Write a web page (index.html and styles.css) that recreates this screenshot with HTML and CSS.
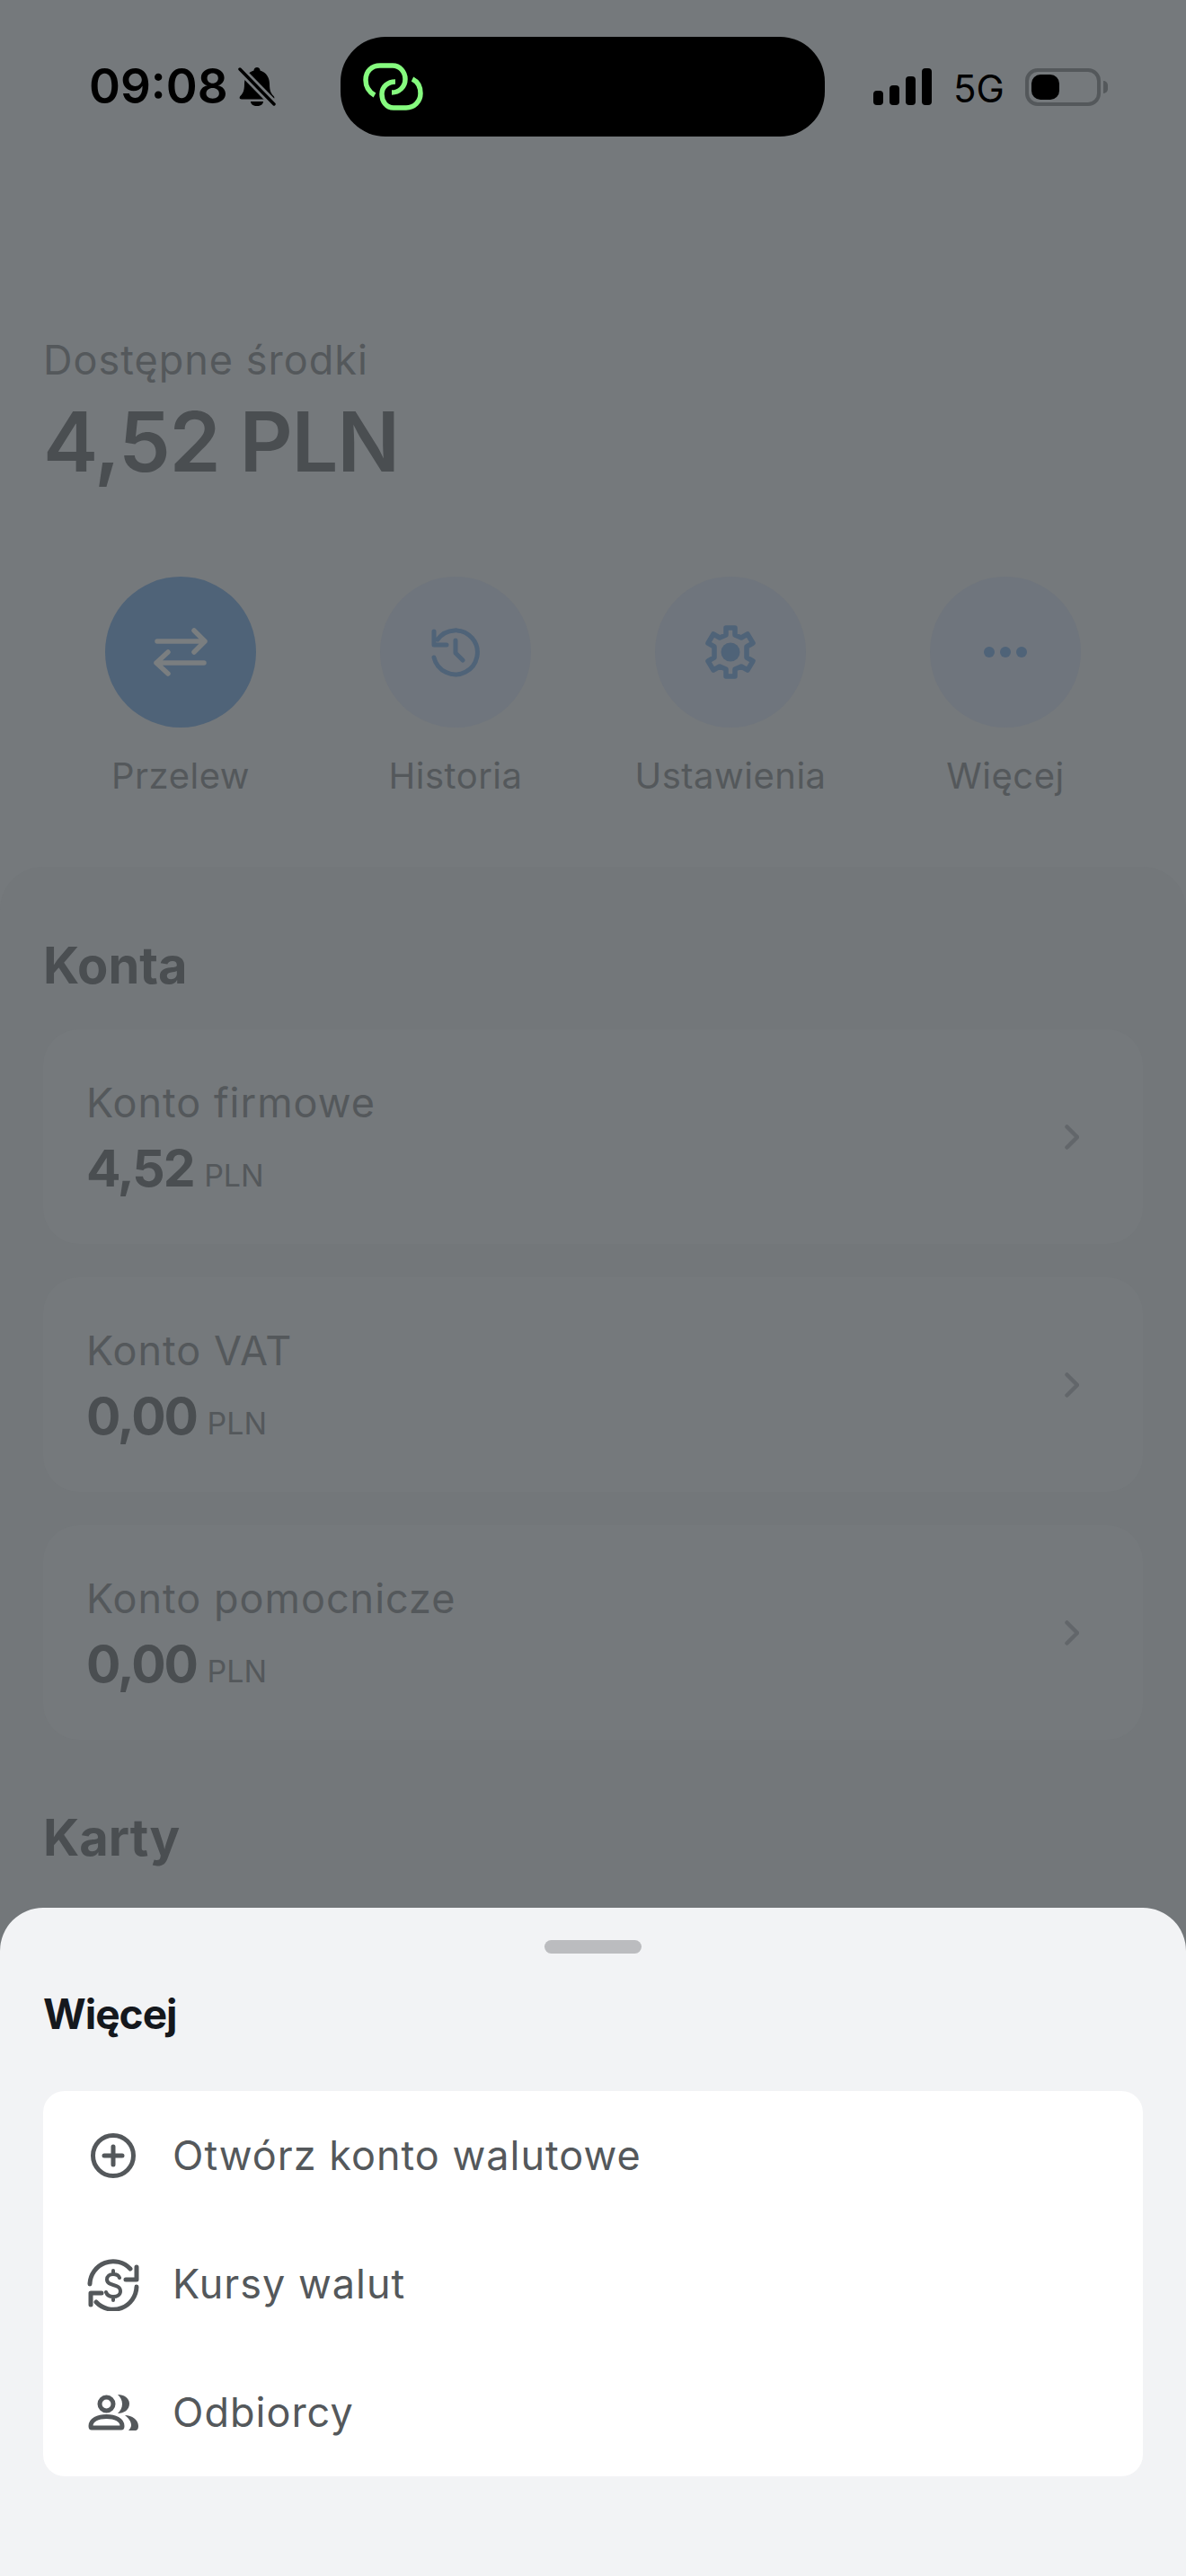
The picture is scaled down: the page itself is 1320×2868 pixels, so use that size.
FILE: index.html
```html
<!DOCTYPE html>
<html lang="pl">
<head>
  <meta charset="UTF-8" />
  <title>Więcej</title>
  <link rel="stylesheet" href="styles.css">
</head>
<body>
  <div class="screen">
    <!-- Status bar -->
    <div class="status-bar">
      <span class="status-time">09:08</span>
      <svg class="bell" viewBox="0 0 42 45" fill="#000">
        <path d="M21 1c2 0 3.500 1.500 3.500 3.500 7 2 10.500 8 10.500 15 0 8 2 11 5 14 1 2 0 3-2 3H4c-2 0-3-1-2-3 3-3 5-6 5-14 0-7 3.500-13 10.500-15C17.500 2.500 19 1 21 1zM14 39h14c0 3-3 5-7 5s-7-2-7-5z"/>
        <path d="M2 3l38 39" stroke="#75797c" stroke-width="9"/>
        <path d="M2 3l38 39" stroke="#000" stroke-width="3.500" stroke-linecap="round"/>
      </svg>
      <div class="island">
        <svg class="island-logo" viewBox="0 0 67 53" fill="none" stroke="#86fb7f" stroke-width="5.500">
          <path d="M13 36C6 32 3 26 3 19 3 9 10 3 19 3h14c8 0 14 7 14 15 0 9-7 15-15 15"/>
          <path d="M55 18c6 3 9 9 9 16 0 9-7 16-16 16H34c-8 0-13-7-13-15 0-9 7-14 15-14"/>
        </svg>
      </div>
      <div class="signal">
        <i class="bar-1"></i><i class="bar-2"></i><i class="bar-3"></i><i class="bar-4"></i>
      </div>
      <span class="status-net">5G</span>
      <div class="battery"><div class="battery-level"></div></div>
      <div class="battery-cap"></div>
    </div>

    <!-- Balance -->
    <div class="balance">
      <div class="balance-label">Dostępne środki</div>
      <div class="balance-value">4,52 PLN</div>
    </div>

    <!-- Quick actions -->
    <div class="actions">
      <div class="action">
        <div class="action-circle action-primary">
          <svg viewBox="0 0 60 60" fill="none" stroke="#7a7e80" stroke-width="5.500" stroke-linecap="round" stroke-linejoin="round">
            <path d="M4 18h53M45 6l12 12-12 12M56 42H3M16 30L3 42l13 12"/>
          </svg>
        </div>
        <span>Przelew</span>
      </div>
      <div class="action">
        <div class="action-circle">
          <svg viewBox="0 0 60 60" fill="none" stroke="#4f6378" stroke-width="5" stroke-linecap="round" stroke-linejoin="round">
            <path d="M10 16A24.500 24.500 0 1 1 6 36M6 7v15h14M30 17v14l8 8"/>
          </svg>
        </div>
        <span>Historia</span>
      </div>
      <div class="action">
        <div class="action-circle">
          <svg viewBox="0 0 60 60" fill="none" stroke="#4f6378" stroke-width="5.500" stroke-linejoin="round">
            <path d="M25 3h10v8l7 3 7-4 6 10-7 4v12l7 4-6 10-7-4-7 3v8H25v-8l-7-3-7 4-6-10 7-4V24l-7-4 6-10 7 4 7-3z"/>
            <circle cx="30" cy="30" r="10.500" fill="#4f6378" stroke="none"/>
          </svg>
        </div>
        <span>Ustawienia</span>
      </div>
      <div class="action">
        <div class="action-circle">
          <svg viewBox="0 0 60 60" fill="#4f6378">
            <circle cx="12" cy="30" r="6"/>
            <circle cx="30" cy="30" r="6"/>
            <circle cx="48" cy="30" r="6"/>
          </svg>
        </div>
        <span>Więcej</span>
      </div>
    </div>

    <!-- Accounts -->
    <div class="section">
      <h2>Konta</h2>
      <div class="account">
        <div class="account-info">
          <div class="account-name">Konto firmowe</div>
          <div class="account-value">4,52 <span>PLN</span></div>
        </div>
        <svg class="chevron" viewBox="0 0 16 28" fill="none" stroke="#62666a" stroke-width="4.500" stroke-linecap="round" stroke-linejoin="round"><path d="M2.500 2.500L14 14 2.500 25.500"/></svg>
      </div>
      <div class="account">
        <div class="account-info">
          <div class="account-name">Konto VAT</div>
          <div class="account-value">0,00 <span>PLN</span></div>
        </div>
        <svg class="chevron" viewBox="0 0 16 28" fill="none" stroke="#62666a" stroke-width="4.500" stroke-linecap="round" stroke-linejoin="round"><path d="M2.500 2.500L14 14 2.500 25.500"/></svg>
      </div>
      <div class="account">
        <div class="account-info">
          <div class="account-name">Konto pomocnicze</div>
          <div class="account-value">0,00 <span>PLN</span></div>
        </div>
        <svg class="chevron" viewBox="0 0 16 28" fill="none" stroke="#62666a" stroke-width="4.500" stroke-linecap="round" stroke-linejoin="round"><path d="M2.500 2.500L14 14 2.500 25.500"/></svg>
      </div>
      <h2 class="cards-title">Karty</h2>
    </div>

    <!-- Bottom sheet -->
    <div class="sheet">
      <div class="sheet-handle"></div>
      <h3>Więcej</h3>
      <div class="menu">
        <div class="menu-row">
          <svg viewBox="0 0 60 60" fill="none" stroke="#54585b" stroke-width="5" stroke-linecap="round">
            <circle cx="30" cy="30" r="22.500"/>
            <path d="M30 20v20M20 30h20"/>
          </svg>
          <span>Otwórz konto walutowe</span>
        </div>
        <div class="menu-row">
          <svg viewBox="0 0 60 60" fill="none" stroke="#54585b" stroke-width="5" stroke-linecap="round" stroke-linejoin="round">
            <path d="M4 30A26 26 0 0 1 49 13M56 33A26 26 0 0 1 11 50"/>
            <path d="M56 11v14H44M5 53V40h12"/>
            <path stroke-width="4" d="M37 23c-1-3-4-4-7-4-4 0-7 2-7 6 0 8 15 4 15 13 0 4-4 6-8 6s-7-2-8-5M30 15v4M30 44v4"/>
          </svg>
          <span>Kursy walut</span>
        </div>
        <div class="menu-row">
          <svg viewBox="0 0 60 60" fill="#54585b">
            <circle cx="22.500" cy="20.500" r="7.500" fill="none" stroke="#54585b" stroke-width="5"/>
            <path d="M35 10c7 0 13 4 13 10 0 7-6 11-13 11 3-3 5-6 5-10.500S38 13 35 10z"/>
            <path d="M6 47h33c1 0 1-1 1-2 0-7-8-10.500-17.500-10.500S5 38 5 45c0 1 0 2 1 2z" fill="none" stroke="#54585b" stroke-width="5" stroke-linejoin="round"/>
            <path d="M43 33c8 0 15 5 15 12 0 3-1 5-4 5h-7c2-2 3-4 3-6 0-4-3-8-7-11z"/>
          </svg>
          <span>Odbiorcy</span>
        </div>
      </div>
    </div>
  </div>
</body>
</html>
```

FILE: styles.css
```css
* {
  box-sizing: border-box;
}
html, body {
  margin: 0;
  padding: 0;
}
body {
  font-family: Inter, "Liberation Sans", sans-serif;
  background-color: #75797c;
}
.screen {
  position: relative;
  width: 1320px;
  height: 2868px;
  overflow: hidden;
  background-color: #75797c;
  color: #54585b;
}

/* Status bar */
.status-bar {
  display: flex;
  align-items: center;
  height: 111px;
  margin-top: 41px;
  padding-left: 99px;
  color: #000;
}
.status-time {
  width: 160px;
  font-size: 53px;
  font-weight: 600;
  line-height: 1;
}
.bell {
  width: 42px;
  height: 45px;
  margin-left: 6px;
}
.island {
  display: flex;
  align-items: center;
  width: 539px;
  height: 111px;
  margin-left: 72px;
  padding-left: 25px;
  background: #000;
  border-radius: 50px;
}
.island-logo {
  width: 67px;
  height: 53px;
}
.signal {
  display: flex;
  align-items: flex-end;
  gap: 7px;
  width: 65px;
  height: 41px;
  margin-left: 54px;
}
.signal i {
  display: block;
  width: 11px;
  background: #000;
  border-radius: 4px;
}
.bar-1 { height: 16px; }
.bar-2 { height: 22px; }
.bar-3 { height: 32px; }
.bar-4 { height: 41px; }
.status-net {
  width: 57px;
  margin-top: 4px;
  margin-left: 24px;
  font-size: 42px;
  font-weight: 400;
  line-height: 1;
}
.battery {
  width: 84px;
  height: 42px;
  margin-left: 23px;
  padding: 3px;
  border: 4px solid #54585b;
  border-radius: 14px;
}
.battery-level {
  width: 31px;
  height: 100%;
  background: #000;
  border-radius: 10px;
}
.battery-cap {
  width: 5px;
  height: 14px;
  margin-left: 3px;
  background: #54585b;
  border-radius: 0 7px 7px 0;
}

/* Balance */
.balance {
  margin-top: 221px;
  padding-left: 48px;
}
.balance-label {
  font-size: 45px;
  line-height: 56px;
  letter-spacing: 1px;
}
.balance-value {
  margin-top: 11px;
  font-size: 92px;
  font-weight: 600;
  line-height: 104px;
  letter-spacing: -1.3px;
  color: #4a4e51;
}

/* Quick actions */
.actions {
  display: grid;
  grid-template-columns: repeat(4, 1fr);
  margin-top: 98px;
  padding: 0 48px;
}
.action {
  display: flex;
  flex-direction: column;
  align-items: center;
  font-size: 40px;
  line-height: 50px;
  letter-spacing: 0.5px;
}
.action-circle {
  display: flex;
  align-items: center;
  justify-content: center;
  width: 168px;
  height: 168px;
  margin-bottom: 29px;
  background-color: #6f757d;
  border-radius: 50%;
}
.action-circle svg {
  width: 60px;
  height: 60px;
}
.action-primary {
  background-color: #4f6378;
}

/* Accounts */
.section {
  height: 1900px;
  margin-top: 76px;
  padding: 76px 48px 0;
  background-color: #73777a;
  border-radius: 48px 48px 0 0;
}
.section h2 {
  margin: 0 0 37px;
  font-size: 56px;
  font-weight: 700;
  line-height: 68px;
  color: #4a4e51;
}
.section .cards-title {
  margin-top: 75px;
}
.account {
  display: flex;
  align-items: center;
  justify-content: space-between;
  height: 239px;
  margin-bottom: 37px;
  padding: 0 47px 0 48px;
  background-color: #75797c;
  border-radius: 40px;
}
.account-info {
  padding-top: 12px;
}
.account-name {
  font-size: 45px;
  line-height: 56px;
  letter-spacing: 1px;
}
.account-value {
  margin-top: 10px;
  font-size: 57px;
  font-weight: 700;
  line-height: 70px;
  letter-spacing: -2px;
  color: #4a4e51;
}
.account-value span {
  font-size: 34px;
  font-weight: 400;
  letter-spacing: 0;
  color: #54585b;
}
.chevron {
  width: 16px;
  height: 28px;
  margin-right: 24px;
}

/* Bottom sheet */
.sheet {
  position: absolute;
  left: 0;
  right: 0;
  bottom: 0;
  height: 744px;
  padding: 36px 48px 0;
  background-color: #f2f3f5;
  border-radius: 48px 48px 0 0;
}
.sheet-handle {
  width: 108px;
  height: 15px;
  margin: 0 auto;
  background-color: #bbbcbf;
  border-radius: 8px;
}
.sheet h3 {
  margin: 37px 0 0;
  font-size: 46px;
  font-weight: 700;
  line-height: 60px;
  letter-spacing: -1px;
  color: #15181d;
}
.menu {
  margin-top: 56px;
  background-color: #fff;
  border-radius: 24px;
}
.menu-row {
  display: flex;
  align-items: center;
  gap: 36px;
  height: 143px;
  padding-left: 48px;
  font-size: 45px;
  letter-spacing: 1px;
  color: #54585b;
}
.menu-row svg {
  width: 60px;
  height: 60px;
  flex-shrink: 0;
}
```
